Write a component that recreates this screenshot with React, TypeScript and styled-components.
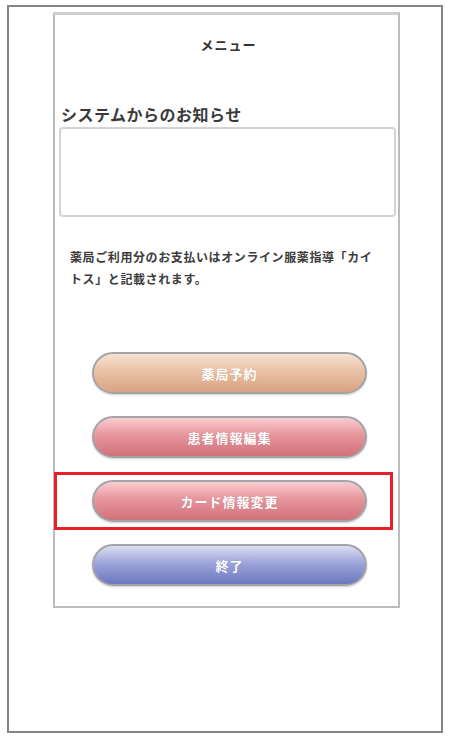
import React from 'react';
import styled, { createGlobalStyle, css } from 'styled-components';

const GlobalStyle = createGlobalStyle`
  html, body {
    margin: 0;
    padding: 0;
    background: #ffffff;
    font-family: "Noto Sans CJK JP", "Noto Sans", sans-serif;
  }
`;

const Frame = styled.div`
  box-sizing: border-box;
  width: 436px;
  height: 728px;
  margin: 5px 0 0 7px;
  border: 2px solid #858585;
  padding: 5px 0 0 44px;
`;

const Panel = styled.div`
  box-sizing: border-box;
  width: 347px;
  border: 2px solid #bcbcbc;
  border-top: 3px solid #cfcfcf;
  display: flex;
  flex-direction: column;
  padding: 0 0 20px 0;
`;

const Header = styled.div`
  text-align: center;
  font-size: 13px;
  font-weight: 700;
  line-height: 18px;
  letter-spacing: 1px;
  color: #333;
  padding: 21px 0 0 4px;
  height: 68px;
`;

const Title = styled.h2`
  margin: 0 0 3px 6px;
  font-size: 16px;
  line-height: 20px;
  font-weight: 700;
  letter-spacing: 0.5px;
  color: #3a3a3a;
`;

const NoticeBox = styled.div`
  box-sizing: border-box;
  margin-left: 4px;
  width: 337px;
  height: 90px;
  border: 2px solid #d4d4d4;
  border-radius: 4px;
  background: #fff;
`;

const Note = styled.p`
  margin: 29px 0 0 15px;
  width: 312px;
  font-size: 12px;
  line-height: 22px;
  font-weight: 700;
  letter-spacing: 0.6px;
  color: #3c3c3c;
`;

const ButtonList = styled.div`
  display: flex;
  flex-direction: column;
  gap: 22px;
  margin: 62px 0 0 37px;
`;

const tones = {
  tan: css`
    background: linear-gradient(#f6e2d2 0%, #e9c1a6 45%, #d9a382 100%);
  `,
  rose: css`
    background: linear-gradient(#f8cdd0 0%, #e6959c 45%, #d2727b 100%);
  `,
  blue: css`
    background: linear-gradient(#dcdff3 0%, #9da4da 45%, #6d77bf 100%);
  `,
};

const MenuButton = styled.button<{ $tone: keyof typeof tones }>`
  box-sizing: border-box;
  width: 275px;
  height: 42px;
  border: 2px solid #a3a3a8;
  border-radius: 21px;
  ${({ $tone }) => tones[$tone]}
  color: #fff;
  font-family: "Noto Sans CJK JP", "Noto Sans", sans-serif;
  font-size: 13px;
  font-weight: 700;
  letter-spacing: 1px;
  text-shadow: 0 0 1px rgba(0, 0, 0, 0.15);
  box-shadow: 0 1px 2px rgba(0, 0, 0, 0.2);
  cursor: pointer;
`;

const Highlight = styled.div`
  position: relative;

  &::after {
    content: '';
    position: absolute;
    left: -38px;
    top: -8px;
    width: 339px;
    height: 58px;
    box-sizing: border-box;
    border: 3px solid #e82029;
    pointer-events: none;
  }
`;

const App: React.FC = () => {
  return (
    <>
      <GlobalStyle />
      <Frame>
        <Panel>
          <Header>メニュー</Header>
          <Title>システムからのお知らせ</Title>
          <NoticeBox />
          <Note>
            薬局ご利用分のお支払いはオンライン服薬指導「カイトス」と記載されます。
          </Note>
          <ButtonList>
            <MenuButton $tone="tan">薬局予約</MenuButton>
            <MenuButton $tone="rose">患者情報編集</MenuButton>
            <Highlight>
              <MenuButton $tone="rose">カード情報変更</MenuButton>
            </Highlight>
            <MenuButton $tone="blue">終了</MenuButton>
          </ButtonList>
        </Panel>
      </Frame>
    </>
  );
};

export default App;
